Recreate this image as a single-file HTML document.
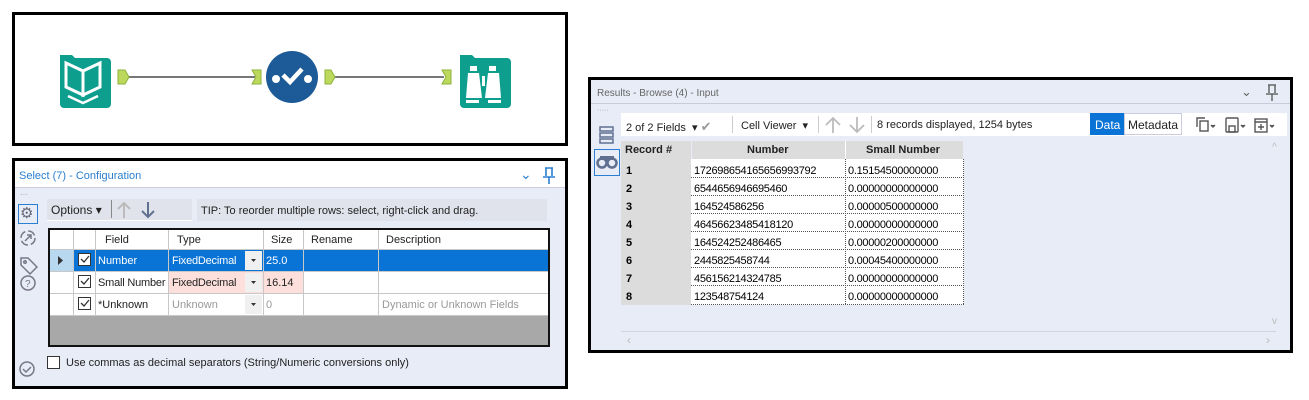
<!DOCTYPE html><html><head><style>
*{box-sizing:border-box;margin:0;padding:0}
body{width:1309px;height:400px;background:#fff;position:relative;font-family:"Liberation Sans",sans-serif;overflow:hidden}
.a{position:absolute}
.t{font-size:11px;color:#222;white-space:nowrap}
</style></head><body>
<div class="a" style="left:12px;top:12px;width:556px;height:134px;border:3px solid #000"></div>
<svg class="a" style="left:0;top:0" width="570" height="150">
<path d="M60 55h12l3 3h32a4 4 0 0 1 4 4v42a4 4 0 0 1-4 4h-43a4 4 0 0 1-4-4z" fill="#0e9e8e"/>
<path d="M66 63l17 8v24l-17-8zM100 63l-17 8v24l17-8z" fill="none" stroke="#fff" stroke-width="3"/>
<path d="M68 96l15 7 15-7" fill="none" stroke="#fff" stroke-width="2.5"/>
<line x1="128" y1="77" x2="255" y2="77" stroke="#777" stroke-width="2"/>
<line x1="333" y1="77" x2="444" y2="77" stroke="#777" stroke-width="2"/>
<path d="M118 70h7l4 7-4 7h-7z" fill="#bcd95e" stroke="#8bb23a"/>
<path d="M252 70h9v14h-9l4-7z" fill="#bcd95e" stroke="#8bb23a"/>
<path d="M325 70h6l4 7-4 7h-6z" fill="#bcd95e" stroke="#8bb23a"/>
<path d="M442 70h9v14h-9l4-7z" fill="#bcd95e" stroke="#8bb23a"/>
<circle cx="292" cy="77" r="26" fill="#1c5b97"/>
<circle cx="276" cy="79" r="4" fill="#fff"/><circle cx="308" cy="79" r="4" fill="#fff"/>
<path d="M283 75l7 7 12-13" fill="none" stroke="#fff" stroke-width="4.5"/>
<path d="M460 55h12l3 3h32a4 4 0 0 1 4 4v42a4 4 0 0 1-4 4h-43a4 4 0 0 1-4-4z" fill="#0e9e8e"/>
<rect x="470" y="66" width="7" height="5" fill="#fff"/><rect x="489" y="66" width="7" height="5" fill="#fff"/>
<path d="M468 73h11l3 25h-16zM488 73h11l2 25h-16z" fill="#fff"/>
<rect x="482" y="76" width="3" height="10" fill="#fff"/>
<rect x="466" y="100" width="13" height="3" fill="#fff"/><rect x="488" y="100" width="13" height="3" fill="#fff"/>
</svg>

<div class="a" style="left:12px;top:158px;width:556px;height:231px;border:3px solid #000;background:#e8ecf7"></div>
<div class="a" style="left:15px;top:161px;width:550px;height:27px;background:#fff;border-bottom:1px solid #ccd"></div>
<div class="a t" style="left:19px;top:170px;color:#2a7fd0;font-size:11px">Select (7) - Configuration</div>
<div class="a t" style="left:520px;top:166px;color:#2a7fd0;font-size:14px">&#8964;</div>
<svg class="a" style="left:542px;top:167px" width="14" height="18"><path d="M3 1h8M4 1v8M10 1v8M1 10h12M7 10v7" stroke="#2a7fd0" stroke-width="1.6" fill="none"/></svg>
<div class="a t" style="left:20px;top:190px;color:#999;font-size:8px">···</div>
<div class="a" style="left:18px;top:204px;width:20px;height:20px;border:1px solid #2a7fd0"></div>
<div class="a t" style="left:20px;top:204px;font-size:15px;color:#667">⚙</div>
<svg class="a" style="left:18px;top:228px" width="20" height="80" fill="none" stroke="#778" stroke-width="1.5">
<circle cx="10" cy="10" r="7" stroke-dasharray="8 3"/><path d="M7 13l6-6M9 7h4v4"/>
<path d="M3 30v7l9 9 7-7-9-9z"/><circle cx="7" cy="34" r="1.2"/>
<circle cx="10" cy="55" r="7"/><text x="7" y="59" font-size="10" fill="#778" stroke="none">?</text>
</svg>
<svg class="a" style="left:18px;top:360px" width="20" height="20" fill="none" stroke="#778" stroke-width="1.5"><circle cx="9" cy="9" r="7"/><path d="M5 9l3 3 5-5"/></svg>
<div class="a" style="left:47px;top:199px;width:145px;height:22px;background:#e0e3eb;border-bottom:1px solid #fff"></div>
<div class="a t" style="left:51px;top:203px;font-size:12px">Options ▾</div>
<div class="a" style="left:111px;top:200px;width:1px;height:18px;background:#888"></div>
<svg class="a" style="left:115px;top:200px" width="45" height="20" fill="none" stroke-width="2"><path d="M9 18V3M3 9l6-6 6 6" stroke="#bbb"/><path d="M33 2v15M27 11l6 6 6-6" stroke="#607090"/></svg>
<div class="a" style="left:197px;top:199px;width:350px;height:22px;background:#e0e3eb"></div>
<div class="a t" style="left:201px;top:205px;font-size:11px">TIP: To reorder multiple rows: select, right-click and drag.</div>
<div class="a" style="left:48px;top:228px;width:502px;height:119px;border:2px solid #111;background:#a8a8a8"></div>
<div class="a" style="left:50px;top:230px;width:498px;height:86px;background:#fff"></div>
<div class="a" style="left:50px;top:250px;width:23px;height:21px;background:#b8d8f0"></div>
<div class="a" style="left:73px;top:250px;width:475px;height:21px;background:#0a74d6"></div>
<div class="a" style="left:168px;top:272px;width:95px;height:21px;background:#fde0dc"></div>
<div class="a" style="left:263px;top:272px;width:40px;height:21px;background:#fde0dc"></div>
<div class="a" style="left:245px;top:251px;width:17px;height:19px;background:#f0f0f0"></div>
<div class="a" style="left:245px;top:273px;width:17px;height:19px;background:#f0f0f0"></div>
<div class="a" style="left:245px;top:295px;width:17px;height:19px;background:#f0f0f0"></div>
<svg class="a" style="left:50px;top:230px" width="498" height="86">
<g stroke="#c8c8c8" stroke-width="1">
<line x1="0" y1="19.5" x2="498" y2="19.5"/><line x1="0" y1="41.5" x2="498" y2="41.5"/><line x1="0" y1="63.5" x2="498" y2="63.5"/><line x1="0" y1="85.5" x2="498" y2="85.5"/>
<line x1="23.5" y1="0" x2="23.5" y2="86"/><line x1="45.5" y1="0" x2="45.5" y2="86"/><line x1="118.5" y1="0" x2="118.5" y2="86"/><line x1="213.5" y1="0" x2="213.5" y2="86"/><line x1="253.5" y1="0" x2="253.5" y2="86"/><line x1="328.5" y1="0" x2="328.5" y2="86"/>
</g>
<path d="M8 26l5 4.5-5 4.5z" fill="#333"/>
<g fill="#fff" stroke="#333"><rect x="28.5" y="23.5" width="12" height="12"/><rect x="28.5" y="45.5" width="12" height="12"/><rect x="28.5" y="67.5" width="12" height="12"/></g>
<g fill="none" stroke="#333" stroke-width="1.3"><path d="M31 29l3 3 5-6M31 51l3 3 5-6M31 73l3 3 5-6"/></g>
<g fill="#333"><path d="M201 29h5l-2.5 3zM201 51h5l-2.5 3zM201 73h5l-2.5 3z"/></g>
</svg>
<div class="a t" style="left:105px;top:234px">Field</div>
<div class="a t" style="left:177px;top:234px">Type</div>
<div class="a t" style="left:271px;top:234px">Size</div>
<div class="a t" style="left:311px;top:234px">Rename</div>
<div class="a t" style="left:386px;top:234px">Description</div>
<div class="a t" style="left:98px;top:255px;color:#fff">Number</div>
<div class="a t" style="left:172px;top:255px;color:#fff;letter-spacing:-0.2px">FixedDecimal</div>
<div class="a t" style="left:266px;top:255px;color:#fff">25.0</div>
<div class="a t" style="left:98px;top:277px;letter-spacing:-0.2px">Small Number</div>
<div class="a t" style="left:172px;top:277px;letter-spacing:-0.2px">FixedDecimal</div>
<div class="a t" style="left:266px;top:277px">16.14</div>
<div class="a t" style="left:98px;top:299px">*Unknown</div>
<div class="a t" style="left:172px;top:299px;color:#999">Unknown</div>
<div class="a t" style="left:266px;top:299px;color:#999">0</div>
<div class="a t" style="left:382px;top:299px;color:#999">Dynamic or Unknown Fields</div>
<div class="a" style="left:47px;top:356px;width:13px;height:13px;border:1px solid #333;background:#fff"></div>
<div class="a t" style="left:66px;top:357px">Use commas as decimal separators (String/Numeric conversions only)</div>

<div class="a" style="left:588px;top:77px;width:705px;height:276px;border:3px solid #000;background:#e8ecf7"></div>
<div class="a" style="left:591px;top:80px;width:699px;height:24px;border-bottom:1px solid #c8ccd8"></div>
<div class="a t" style="left:597px;top:88px;color:#666;font-size:10px">Results - Browse (4) - Input</div>
<div class="a t" style="left:1241px;top:84px;color:#666;font-size:13px">&#8964;</div>
<svg class="a" style="left:1265px;top:84px" width="14" height="18"><path d="M3 1h8M4 1v8M10 1v8M1 10h12M7 10v7" stroke="#666" stroke-width="1.5" fill="none"/></svg>
<div class="a t" style="left:597px;top:107px;color:#999;font-size:7px">·····</div>
<svg class="a" style="left:598px;top:125px" width="18" height="20" fill="none" stroke="#607090" stroke-width="1.5"><rect x="2" y="2" width="13" height="4"/><rect x="2" y="8" width="13" height="4"/><rect x="2" y="14" width="13" height="4"/></svg>
<div class="a" style="left:594px;top:149px;width:26px;height:27px;border:1px solid #2a7fd0;background:#e8ecf7"></div>
<svg class="a" style="left:596px;top:153px" width="22" height="16"><circle cx="6" cy="10" r="4.5" fill="none" stroke="#607090" stroke-width="2.5"/><circle cx="16" cy="10" r="4.5" fill="none" stroke="#607090" stroke-width="2.5"/><rect x="4" y="3" width="14" height="4" fill="#607090"/></svg>
<div class="a" style="left:621px;top:113px;width:666px;height:23px;background:#fff"></div>
<div class="a t" style="left:626px;top:119px">2 of 2 Fields &nbsp;▾ <span style="color:#999;font-size:13px">✔</span></div>
<div class="a" style="left:732px;top:116px;width:1px;height:17px;background:#ccc"></div>
<div class="a t" style="left:741px;top:119px">Cell Viewer &nbsp;▾</div>
<div class="a" style="left:818px;top:116px;width:1px;height:17px;background:#ccc"></div>
<svg class="a" style="left:822px;top:115px" width="48" height="20" fill="none" stroke="#bbb" stroke-width="1.8"><path d="M11 18V3M4 10l7-7 7 7M35 2v15M28 10l7 7 7-7"/></svg>
<div class="a" style="left:871px;top:116px;width:1px;height:17px;background:#ccc"></div>
<div class="a t" style="left:877px;top:119px">8 records displayed, 1254 bytes</div>
<div class="a" style="left:1090px;top:113px;width:34px;height:22px;background:#0a74d6"></div>
<div class="a t" style="left:1095px;top:118px;color:#fff;font-size:12px">Data</div>
<div class="a" style="left:1124px;top:113px;width:58px;height:22px;border:1px solid #ccd;background:#fff"></div>
<div class="a t" style="left:1128px;top:118px;font-size:12px">Metadata</div>
<svg class="a" style="left:1194px;top:115px" width="88" height="20" fill="none" stroke="#555" stroke-width="1.4"><rect x="6" y="6" width="8" height="10"/><path d="M3 12V3h8"/><path d="M17 10l2 2 2-2" fill="#555"/><rect x="32" y="3" width="12" height="14" rx="1"/><rect x="35" y="11" width="6" height="6"/><path d="M47 10l2 2 2-2" fill="#555"/><rect x="61" y="4" width="12" height="13"/><path d="M61 7h12M67 9v6M64 12h6"/><path d="M76 10l2 2 2-2" fill="#555"/></svg>
<div class="a" style="left:621px;top:141px;width:70px;height:164px;background:#dcdcdc"></div>
<div class="a" style="left:692px;top:141px;width:271px;height:18px;background:#dcdcdc"></div>
<div class="a" style="left:845px;top:141px;width:1px;height:18px;background:#fff"></div>
<div class="a" style="left:691px;top:159px;width:273px;height:146px;background:#fff"></div>
<svg class="a" style="left:691px;top:159px" width="274" height="147"><g stroke="#555" stroke-dasharray="1 1"><line x1="0" y1="18.5" x2="273" y2="18.5"/><line x1="0" y1="36.5" x2="273" y2="36.5"/><line x1="0" y1="54.5" x2="273" y2="54.5"/><line x1="0" y1="72.5" x2="273" y2="72.5"/><line x1="0" y1="90.5" x2="273" y2="90.5"/><line x1="0" y1="108.5" x2="273" y2="108.5"/><line x1="0" y1="126.5" x2="273" y2="126.5"/><line x1="0" y1="145.5" x2="273" y2="145.5"/><line x1="154.5" y1="0" x2="154.5" y2="146"/><line x1="272.5" y1="0" x2="272.5" y2="146"/></g></svg>
<div class="a t" style="left:625px;top:144px;font-weight:bold">Record #</div>
<div class="a t" style="left:747px;top:144px;font-weight:bold">Number</div>
<div class="a t" style="left:866px;top:144px;font-weight:bold">Small Number</div>
<div class="a" style="left:626px;top:162px;font-size:11px;line-height:18px;font-weight:bold">1<br>2<br>3<br>4<br>5<br>6<br>7<br>8</div>
<div class="a" style="left:694px;top:162px;font-size:11px;line-height:18px;letter-spacing:-0.3px">172698654165656993792<br>6544656946695460<br>164524586256<br>46456623485418120<br>164524252486465<br>2445825458744<br>456156214324785<br>123548754124</div>
<div class="a" style="left:848px;top:162px;font-size:11px;line-height:18px;letter-spacing:-0.3px">0.15154500000000<br>0.00000000000000<br>0.00000500000000<br>0.00000000000000<br>0.00000200000000<br>0.00045400000000<br>0.00000000000000<br>0.00000000000000</div>
<div class="a" style="left:621px;top:331px;width:655px;height:1px;background:#d0d4de"></div>
<div class="a t" style="left:627px;top:333px;color:#bbb;font-size:12px">‹</div>
<div class="a t" style="left:1266px;top:333px;color:#bbb;font-size:12px">›</div>
<div class="a t" style="left:1272px;top:142px;color:#bbb;font-size:10px">^</div>
<div class="a t" style="left:1272px;top:316px;color:#bbb;font-size:10px">v</div>
</body></html>
